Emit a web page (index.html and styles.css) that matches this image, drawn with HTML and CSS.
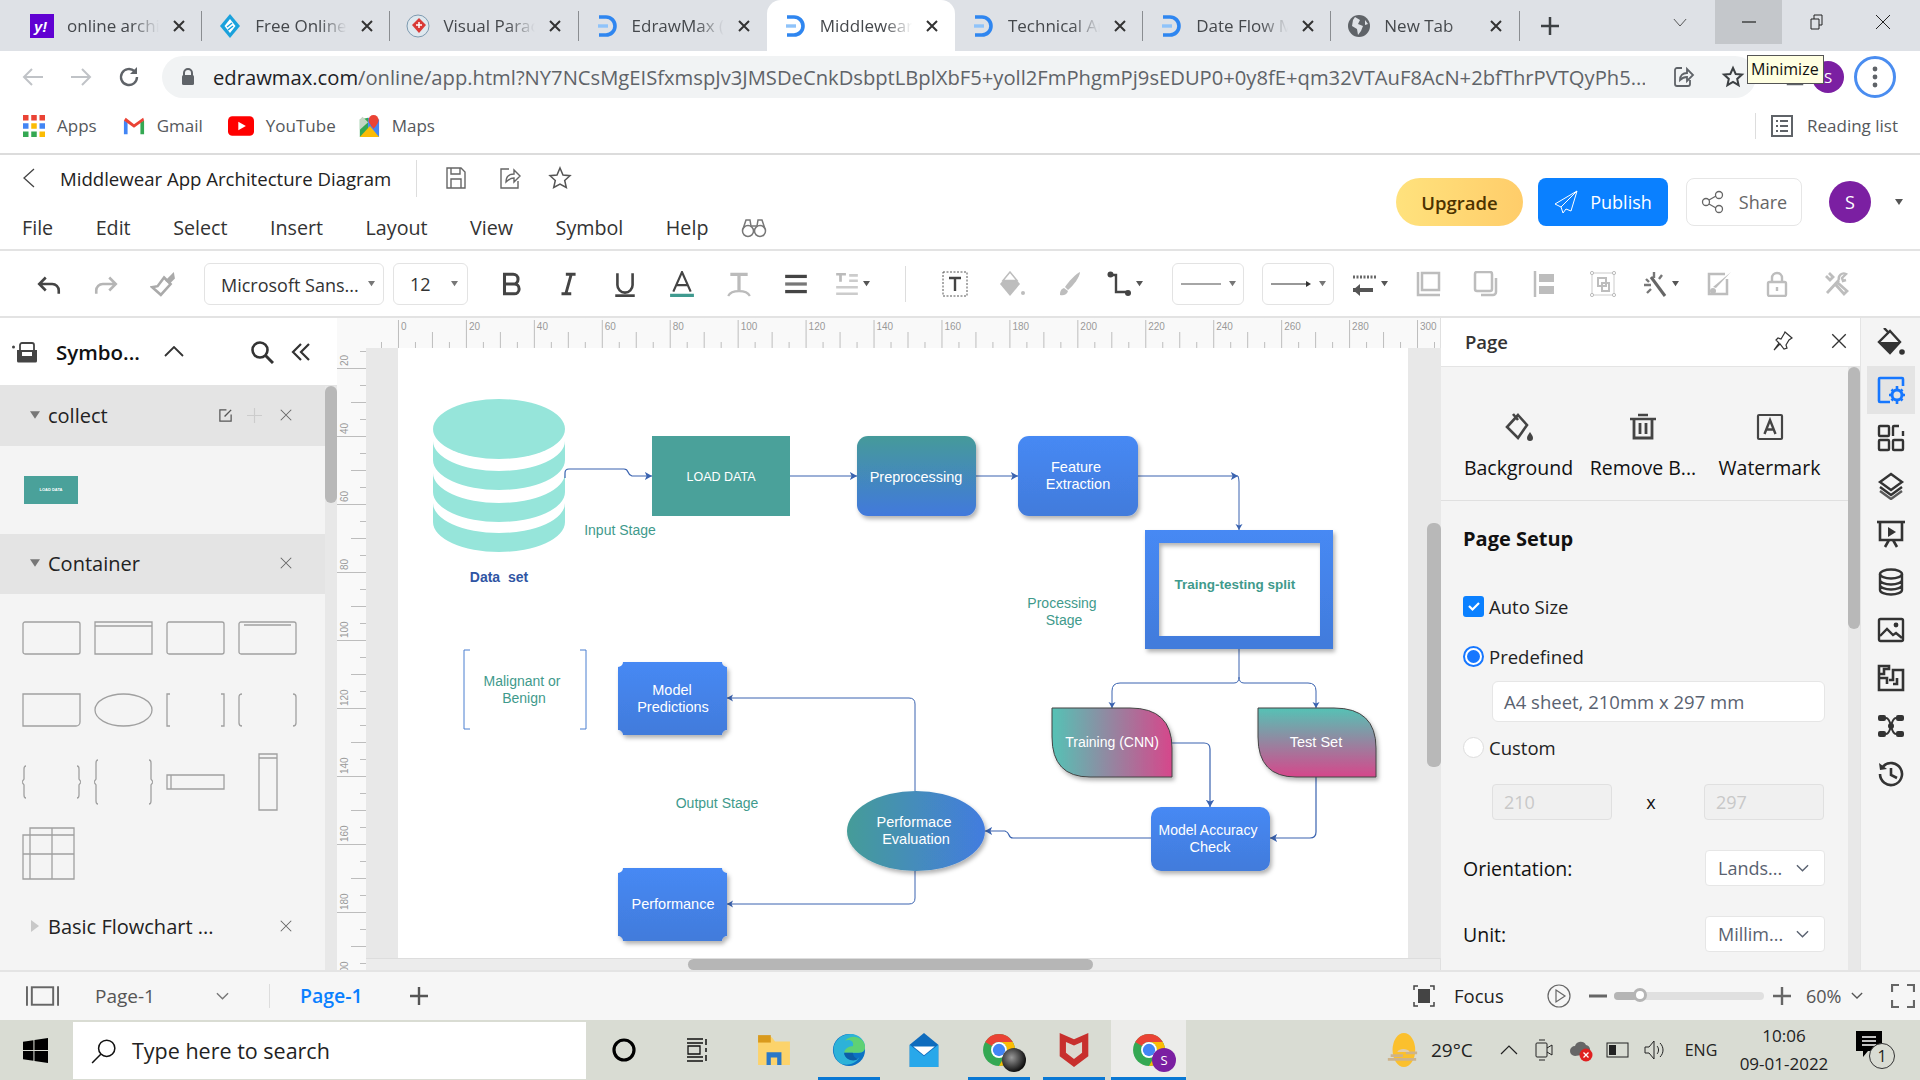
FILE: index.html
```
<!DOCTYPE html>
<html lang="en">
<head>
<meta charset="utf-8">
<title>Middlewear App Architecture Diagram</title>
<link rel="stylesheet" href="styles.css">
</head>
<body>
<svg class="sprite" width="0" height="0">
  <defs>
    <symbol id="edraw" viewBox="0 0 24 24"><path d="M4 3h7a9 9 0 0 1 0 18H4" fill="none" stroke="#2f86f0" stroke-width="3.6"/><path d="M3 12h10" stroke="#8fc3fa" stroke-width="3.4"/></symbol>
    <symbol id="tabx" viewBox="0 0 14 14"><path d="M2 2l10 10M12 2L2 12" stroke="#333" stroke-width="2"/></symbol>
    <symbol id="thinx" viewBox="0 0 16 16"><path d="M2 2l12 12M14 2L2 14" stroke="currentColor" stroke-width="1.2" fill="none"/></symbol>
    <symbol id="caret" viewBox="0 0 10 8"><path d="M1 1h8L5 7z" fill="currentColor"/></symbol>
    <symbol id="vee" viewBox="0 0 14 8"><path d="M1 1l6 6 6-6" fill="none" stroke="currentColor" stroke-width="1.5"/></symbol>
    <symbol id="chrome" viewBox="0 0 32 32"><circle cx="16" cy="16" r="15" fill="#34a853"/><path d="M16 1a15 15 0 0 1 13 7.5H16a7.5 7.5 0 0 0-6.5 3.8L3 8.500A15 15 0 0 1 16 1z" fill="#ea4335"/><path d="M29 8.500A15 15 0 0 1 16 31l6.500-11.200A7.500 7.500 0 0 0 16 8.500z" fill="#fbbc05"/><circle cx="16" cy="16" r="7.500" fill="#fff"/><circle cx="16" cy="16" r="5.800" fill="#4285f4"/></symbol>
    <linearGradient id="gBlue" x1="0" y1="0" x2="0" y2="1"><stop offset="0" stop-color="#4689f4"/><stop offset="1" stop-color="#427bdb"/></linearGradient>
    <linearGradient id="gTealBlue" x1="0" y1="0" x2="0" y2="1"><stop offset="0" stop-color="#459a9a"/><stop offset="1" stop-color="#4279dc"/></linearGradient>
    <linearGradient id="gEval" x1="0" y1="0" x2="1" y2="0"><stop offset="0" stop-color="#459c98"/><stop offset="1" stop-color="#437cdf"/></linearGradient>
    <linearGradient id="gTrain" x1="0" y1="0" x2="1" y2="0"><stop offset="0" stop-color="#55c2b5"/><stop offset="1" stop-color="#d6478b"/></linearGradient>
    <linearGradient id="gTest" x1="0" y1="0" x2="0" y2="1"><stop offset="0" stop-color="#55c2b5"/><stop offset="1" stop-color="#d6478b"/></linearGradient>
    <filter id="shadow" x="-10%" y="-10%" width="125%" height="130%"><feDropShadow dx="2" dy="3" stdDeviation="2" flood-color="#000" flood-opacity=".3"/></filter>
    <marker id="arrow" markerWidth="7" markerHeight="8" refX="6" refY="4" orient="auto"><path d="M0 0.500L6 4 0 7.500 1.500 4z" fill="#3a63b0"/></marker>
    <pattern id="topTicks" patternUnits="userSpaceOnUse" x="398" y="318" width="68" height="30"><path d="M.5 2v28M34.500 14v16M17.500 24v6M51.500 24v6" stroke="#bdbdbd"/></pattern>
    <pattern id="leftTicks" patternUnits="userSpaceOnUse" x="337" y="368" width="29" height="68"><path d="M0 .5h29M14 34.500h15M23 17.500h6M23 51.500h6" stroke="#bdbdbd"/></pattern>
  </defs>
</svg>

<header class="tabstrip">
  <div class="tab sep">
    <svg class="fav" viewBox="0 0 24 24"><rect width="24" height="24" fill="#6001d2"/><text x="4" y="18" class="yh">y!</text></svg>
    <span class="tab-t">online archi</span><svg class="tx"><use href="#tabx"/></svg>
  </div>
  <div class="tab sep">
    <svg class="fav" viewBox="0 0 24 24"><path d="M12 0l10 12-10 12L2 12z" fill="#1aa1dc"/><path d="M12 5l5.500 7-5.500 7-5.500-7z" fill="#fff"/><path d="M9 13l5-4M10 16l5-4" stroke="#1aa1dc" stroke-width="1.500"/></svg>
    <span class="tab-t">Free Online</span><svg class="tx"><use href="#tabx"/></svg>
  </div>
  <div class="tab sep">
    <svg class="fav" viewBox="0 0 24 24"><circle cx="12" cy="12" r="11" fill="#dfe8ee" stroke="#7d9ab0"/><path d="M13 4l7 7-7 8-7-8z" fill="#d93a36"/><path d="M10 11h6M13 8v6" stroke="#fff" stroke-width="1.500"/></svg>
    <span class="tab-t">Visual Parac</span><svg class="tx"><use href="#tabx"/></svg>
  </div>
  <div class="tab">
    <svg class="fav"><use href="#edraw"/></svg>
    <span class="tab-t">EdrawMax (</span><svg class="tx"><use href="#tabx"/></svg>
  </div>
  <div class="tab active">
    <svg class="fav"><use href="#edraw"/></svg>
    <span class="tab-t">Middlewear</span><svg class="tx"><use href="#tabx"/></svg>
  </div>
  <div class="tab sep">
    <svg class="fav"><use href="#edraw"/></svg>
    <span class="tab-t">Technical Ar</span><svg class="tx"><use href="#tabx"/></svg>
  </div>
  <div class="tab sep">
    <svg class="fav"><use href="#edraw"/></svg>
    <span class="tab-t">Date Flow M</span><svg class="tx"><use href="#tabx"/></svg>
  </div>
  <div class="tab sep">
    <svg class="fav" viewBox="0 0 24 24"><circle cx="12" cy="12" r="11" fill="#5f6368"/><path d="M8 3l5 3-2 4 5 2-2 5-3 4-1-6-5-3 1-6zM18 6l3 4-3 1z" fill="#dee1e6"/></svg>
    <span class="tab-t">New Tab</span><svg class="tx"><use href="#tabx"/></svg>
  </div>
  <svg class="newtab" viewBox="0 0 20 20"><path d="M10 1v18M1 10h18" stroke="#3c4043" stroke-width="2.500"/></svg>
  <div class="winctl">
    <svg class="wc-list" viewBox="0 0 16 10"><path d="M1 1l7 8 7-8" fill="none" stroke="#444"/></svg>
    <div class="wc wc-min"><svg viewBox="0 0 16 16"><path d="M1 8h14" stroke="#222" stroke-width="1.200"/></svg></div>
    <div class="wc"><svg viewBox="0 0 16 16"><path d="M3 5h8v10H3zM6 5V1h8v10h-3" fill="none" stroke="#222"/></svg></div>
    <div class="wc"><svg viewBox="0 0 16 16"><path d="M1 1l14 14M15 1L1 15" stroke="#222"/></svg></div>
  </div>
</header>

<div class="addr">
  <svg class="nav" viewBox="0 0 24 24"><path d="M22 12H3M11 4l-8 8 8 8" fill="none" stroke="#c0c3c7" stroke-width="2"/></svg>
  <svg class="nav" viewBox="0 0 24 24"><path d="M2 12h19M13 4l8 8-8 8" fill="none" stroke="#c0c3c7" stroke-width="2"/></svg>
  <svg class="nav" viewBox="0 0 24 24"><path d="M20 12a8 8 0 1 1-2.500-5.800" fill="none" stroke="#5f6368" stroke-width="2.400"/><path d="M20 2v7h-7z" fill="#5f6368"/></svg>
  <div class="omni">
    <svg class="lock" viewBox="0 0 14 18"><path d="M3 8V5a4 4 0 0 1 8 0v3" fill="none" stroke="#5f6368" stroke-width="2"/><rect x="1" y="7" width="12" height="10" rx="1.500" fill="#5f6368"/></svg>
    <span class="url"><b class="url-host">edrawmax.com</b>/online/app.html?NY7NCsMgEISfxmspJv3JMSDeCnkDsbptLBplXbF5+yoll2FmPhgmPj9sEDUP0+0y8fE+qm32VTAuF8AcN+2bfThrPVTQyPh5...</span>
    <svg class="omni-i" viewBox="0 0 24 24"><path d="M11 3H6a2 2 0 0 0-2 2v14a2 2 0 0 0 2 2h11a2 2 0 0 0 2-2v-4" fill="none" stroke="#5f6368" stroke-width="1.800"/><path d="M9 15c0-5 3-7 7-7V4l6 6-6 6v-4c-3 0-5 1-7 3z" fill="none" stroke="#5f6368" stroke-width="1.800"/></svg>
    <svg class="omni-i" viewBox="0 0 24 24"><path d="M12 3l2.700 6 6.300.6-4.800 4.300 1.400 6.300L12 17l-5.600 3.200 1.400-6.300L3 9.600 9.300 9z" fill="none" stroke="#3c4043" stroke-width="2"/></svg>
  </div>
  <svg class="ext" viewBox="0 0 24 24"><path d="M3 8h18v13H3z" fill="#5f6368"/></svg>
  <span class="ava-s">S</span>
  <span class="dots"><svg viewBox="0 0 6 24" width="6" height="24"><circle cx="3" cy="4" r="2.400" fill="#5f6368"/><circle cx="3" cy="12" r="2.400" fill="#5f6368"/><circle cx="3" cy="20" r="2.400" fill="#5f6368"/></svg></span>
  <span class="tooltip">Minimize</span>
</div>

<nav class="bookmarks">
  <svg class="bm-i" viewBox="0 0 20 20"><g><rect x="0" y="0" width="5" height="5" fill="#ea4335"/><rect x="7.500" y="0" width="5" height="5" fill="#ea4335"/><rect x="15" y="0" width="5" height="5" fill="#ea4335"/><rect x="0" y="7.500" width="5" height="5" fill="#4285f4"/><rect x="7.500" y="7.500" width="5" height="5" fill="#fbbc05"/><rect x="15" y="7.500" width="5" height="5" fill="#4285f4"/><rect x="0" y="15" width="5" height="5" fill="#34a853"/><rect x="7.500" y="15" width="5" height="5" fill="#34a853"/><rect x="15" y="15" width="5" height="5" fill="#fbbc05"/></g></svg>
  <span class="bm-t bm-apps">Apps</span>
  <svg class="bm-i" viewBox="0 0 24 20"><path d="M1 19V4l4 2v13z" fill="#4285f4"/><path d="M19 19V6l4-2v15z" fill="#34a853"/><path d="M1 4l11 8 11-8-1-3-10 7L3 1z" fill="#ea4335"/></svg>
  <span class="bm-t bm-gmail">Gmail</span>
  <svg class="bm-i bm-yt" viewBox="0 0 24 18"><rect width="24" height="18" rx="4" fill="#f00"/><path d="M9.500 5l7 4-7 4z" fill="#fff"/></svg>
  <span class="bm-t bm-youtube">YouTube</span>
  <svg class="bm-i" viewBox="0 0 22 24"><path d="M1 5l9-2v19l-9 2z" fill="#34a853"/><path d="M10 3l12 2v19l-12-2z" fill="#4285f4"/><path d="M1 24l11-12 10 12z" fill="#fbbc05"/><path d="M4 2l6 6-9 8V5z" fill="#c4d6c4"/><path d="M16 0a5.500 5.500 0 0 1 5.500 5.500C21.500 9.500 16 15 16 15s-5.500-5.500-5.500-9.500A5.500 5.500 0 0 1 16 0z" fill="#ea4335"/></svg>
  <span class="bm-t">Maps</span>
  <div class="reading">
    <svg class="rl-i" viewBox="0 0 22 22"><rect x="1" y="1" width="20" height="20" fill="none" stroke="#5f6368" stroke-width="2"/><path d="M5 6h2M9 6h8M5 11h2M9 11h8M5 16h2M9 16h8" stroke="#5f6368" stroke-width="2"/></svg>
    <span class="bm-t">Reading list</span>
  </div>
</nav>

<section class="apphead">
  <div class="apphead-l">
    <div class="titlerow">
      <svg class="i-back" viewBox="0 0 12 20"><path d="M11 1L1 10l10 9" fill="none" stroke="#444" stroke-width="1.300"/></svg>
      <span class="doc-title">Middlewear App Architecture Diagram</span>
      <span class="doc-div"></span>
      <svg class="doc-i" viewBox="0 0 24 24"><path d="M3 2h14l4 4v16H3z M7 2v6h9V2 M7 22v-9h10v9" fill="none" stroke="#666" stroke-width="1.400"/></svg>
      <svg class="doc-i" viewBox="0 0 24 24"><path d="M11 3H3v19h17v-7" fill="none" stroke="#666" stroke-width="1.400"/><path d="M8 16c0-5 3-8 8-8V4l6 6-6 6v-4c-4 0-6 2-8 4z" fill="none" stroke="#666" stroke-width="1.400"/></svg>
      <svg class="doc-i" viewBox="0 0 24 24"><path d="M12 2l3 7 7 .7-5.300 4.700 1.600 7.100L12 18l-6.300 3.500 1.600-7.100L2 9.700 9 9z" fill="none" stroke="#555" stroke-width="1.500"/></svg>
    </div>
    <div class="menurow">
      <span>File</span><span>Edit</span><span>Select</span><span>Insert</span><span>Layout</span><span>View</span><span>Symbol</span><span>Help</span>
      <svg class="bino" viewBox="0 0 26 22"><circle cx="7" cy="15" r="5.500" fill="none" stroke="#777" stroke-width="1.500"/><circle cx="19" cy="15" r="5.500" fill="none" stroke="#777" stroke-width="1.500"/><path d="M2 13l3-9h4l1 6h6l1-6h4l3 9" fill="none" stroke="#777" stroke-width="1.500"/></svg>
    </div>
  </div>
  <div class="apphead-r">
    <span class="btn-upgrade">Upgrade</span>
    <span class="btn-publish"><svg viewBox="0 0 24 24" class="pub-i"><path d="M23 1L1 14l6 3zM23 1L7 17l2 6 3-4 5 2z" fill="none" stroke="#fff" stroke-width="1"/></svg>Publish</span>
    <span class="btn-share"><svg viewBox="0 0 24 24" class="shr-i"><circle cx="5" cy="12" r="3.500" fill="none" stroke="#666" stroke-width="1.300"/><circle cx="18" cy="5" r="3.500" fill="none" stroke="#666" stroke-width="1.300"/><circle cx="18" cy="19" r="3.500" fill="none" stroke="#666" stroke-width="1.300"/><path d="M8 10l7-4M8 14l7 4" stroke="#666" stroke-width="1.300"/></svg>Share</span>
    <span class="ava-l">S</span>
    <svg class="ava-c"><use href="#caret"/></svg>
  </div>
</section>

<section class="toolbar">
  <div class="tg tg1">
    <span class="ti"><svg viewBox="0 0 24 24"><path d="M9 6L3 12l6 6M3 12h12a6 6 0 0 1 6 6v3" fill="none" stroke="#444" stroke-width="2.400"/></svg></span>
    <span class="ti"><svg viewBox="0 0 24 24"><path d="M15 6l6 6-6 6M21 12H9a6 6 0 0 0-6 6v3" fill="none" stroke="#b5b5b5" stroke-width="2.400"/></svg></span>
    <span class="ti"><svg viewBox="0 0 24 24"><path d="M13 6l6 6-9 10-8-7 5-1z" fill="none" stroke="#aaa" stroke-width="2.400"/><path d="M14 9l8-8 1 6-5 5z" fill="#aaa"/></svg></span>
  </div>
  <div class="sel sel-font"><span>Microsoft Sans...</span><svg><use href="#caret"/></svg></div>
  <div class="sel sel-size"><span>12</span><svg><use href="#caret"/></svg></div>
  <div class="tg tg2">
    <span class="ti ti-t"><svg viewBox="0 0 24 24"><path d="M6 3h8a4.500 4.500 0 0 1 0 9H6zM6 12h9a4.500 4.500 0 0 1 0 9H6z" fill="none" stroke="#444" stroke-width="2.800"/></svg></span>
    <span class="ti ti-t"><svg viewBox="0 0 24 24"><path d="M10 3h9M6 21h9M15 3l-5 18" fill="none" stroke="#444" stroke-width="2.600"/></svg></span>
    <span class="ti ti-t"><svg viewBox="0 0 24 24"><path d="M5 2v11a7 7 0 0 0 14 0V2" fill="none" stroke="#444" stroke-width="2.400"/><path d="M3 23h18" stroke="#444" stroke-width="3"/></svg></span>
    <span class="ti ti-t"><svg viewBox="0 0 24 24"><path d="M4 19L12 1l8 18M7 13h10" fill="none" stroke="#444" stroke-width="2"/><path d="M1 23h22" stroke="#3f9a8f" stroke-width="4"/></svg></span>
    <span class="ti ti-t"><svg viewBox="0 0 24 24"><path d="M4 3h16M12 3v15" fill="none" stroke="#bbb" stroke-width="3"/><path d="M2 23c3-6 17-6 20 0" fill="none" stroke="#bbb" stroke-width="2"/></svg></span>
    <span class="ti ti-t"><svg viewBox="0 0 24 24"><path d="M2 5h20" stroke="#444" stroke-width="3"/><path d="M2 12h20" stroke="#777" stroke-width="3"/><path d="M2 19h20" stroke="#444" stroke-width="3"/></svg></span>
    <span class="ti ti-t ti-wide"><svg viewBox="0 0 24 24"><path d="M2 3h9M6 3v7" stroke="#bbb" stroke-width="2.500"/><path d="M14 4h8M14 9h8M2 15h20M2 21h20" stroke="#ccc" stroke-width="2.500"/></svg><svg class="mc"><use href="#caret"/></svg></span>
  </div>
  <span class="tb-div"></span>
  <div class="tg tg3">
    <span class="ti"><svg viewBox="0 0 26 26"><path d="M1 1h24v24H1z" fill="none" stroke="#555" stroke-dasharray="2 1.500"/><path d="M7 7h12M13 7v13" stroke="#444" stroke-width="2.400"/></svg></span>
    <span class="ti"><svg viewBox="0 0 26 26"><path d="M11 1l10 12-10 12L1 13z" fill="#bdbdbd"/><path d="M4 9.500h14L11 1z" fill="#fff" stroke="#bdbdbd" stroke-width="1.500"/><circle cx="24" cy="22" r="2" fill="#bdbdbd"/></svg></span>
    <span class="ti"><svg viewBox="0 0 26 26"><path d="M24 1c-3 1-12 10-15 15l3 3c5-4 12-13 12-18z" fill="#bdbdbd"/><path d="M8 17c-3 1-4 3-4 7 3 1 7 0 8-4z" fill="#bdbdbd"/></svg></span>
    <span class="ti ti-wide"><svg viewBox="0 0 26 26"><circle cx="3.500" cy="3.500" r="3" fill="#444"/><circle cx="21" cy="22" r="3" fill="#444"/><path d="M4 4h5v17h11" fill="none" stroke="#444" stroke-width="2.400"/></svg><svg class="mc"><use href="#caret"/></svg></span>
  </div>
  <div class="sel sel-line"><svg class="ln" viewBox="0 0 40 4"><path d="M0 2h40" stroke="#888" stroke-width="1.300"/></svg><svg><use href="#caret"/></svg></div>
  <div class="sel sel-line sel-arrow"><svg class="ln" viewBox="0 0 40 8"><path d="M0 4h38" stroke="#333" stroke-width="1.200"/><path d="M35 1l5 3-5 3z" fill="#333"/></svg><svg><use href="#caret"/></svg></div>
  <div class="tg tg4">
    <span class="ti ti-wide"><svg viewBox="0 0 26 26"><path d="M1 6h24" stroke="#666" stroke-width="3" stroke-dasharray="2 1.500"/><path d="M1 19h20" stroke="#555" stroke-width="4"/><path d="M8 13l-7 6 7 6z" fill="#555"/></svg><svg class="mc"><use href="#caret"/></svg></span>
    <span class="ti"><svg viewBox="0 0 26 26"><path d="M3 1v23h22" fill="none" stroke="#bdbdbd" stroke-width="2.500"/><rect x="7" y="2" width="17" height="17" fill="none" stroke="#bdbdbd" stroke-width="2.500"/></svg></span>
    <span class="ti"><svg viewBox="0 0 26 26"><rect x="2" y="1" width="17" height="19" rx="2" fill="none" stroke="#bdbdbd" stroke-width="2.500"/><path d="M23 7v14a3 3 0 0 1-3 3H8" fill="none" stroke="#bdbdbd" stroke-width="2.500"/></svg></span>
    <span class="ti"><svg viewBox="0 0 26 26"><path d="M3 0v26" stroke="#bdbdbd" stroke-width="2.500"/><rect x="7" y="3" width="15" height="8" fill="#bdbdbd"/><rect x="7" y="15" width="15" height="8" fill="#bdbdbd"/></svg></span>
    <span class="ti"><svg viewBox="0 0 26 26"><rect x="2" y="2" width="22" height="22" fill="none" stroke="#ccc"/><path d="M8 7h8v8H8zM12 12h7v8h-7z" fill="none" stroke="#bdbdbd" stroke-width="2"/><g fill="#fff" stroke="#bbb"><circle cx="2" cy="2" r="1.600"/><circle cx="24" cy="2" r="1.600"/><circle cx="2" cy="24" r="1.600"/><circle cx="24" cy="24" r="1.600"/></g></svg></span>
    <span class="ti ti-wide"><svg viewBox="0 0 26 26"><path d="M8 6l14 19" stroke="#666" stroke-width="3"/><path d="M11 1v6M3 8l3 3M1 14h7M4 22l4-4M19 4l-3 4" stroke="#777" stroke-width="2.400"/></svg><svg class="mc"><use href="#caret"/></svg></span>
    <span class="ti"><svg viewBox="0 0 26 26"><path d="M19 3H3v20h18V8" fill="none" stroke="#bdbdbd" stroke-width="2.500"/><path d="M25 1L10 17l-3-1z" fill="#bdbdbd"/><circle cx="7" cy="20" r="3" fill="#bdbdbd"/></svg></span>
    <span class="ti"><svg viewBox="0 0 26 26"><path d="M8 11V7a5 5 0 0 1 10 0v4" fill="none" stroke="#bdbdbd" stroke-width="2.400"/><rect x="4" y="11" width="18" height="14" rx="1.500" fill="none" stroke="#bdbdbd" stroke-width="2.400"/><path d="M13 16v4" stroke="#bdbdbd" stroke-width="2.400"/></svg></span>
    <span class="ti"><svg viewBox="0 0 26 26"><path d="M4 22L16 9M6 2l4 4-3 3-4-4M13 14l8 9 3-3-9-8" fill="none" stroke="#bdbdbd" stroke-width="2.800"/><path d="M16 9a5 5 0 0 1 7-6l-4 4 1 3 3-1" fill="none" stroke="#bdbdbd" stroke-width="2.400"/></svg></span>
  </div>
</section>

<main class="workspace">
  <aside class="symbols">
    <div class="sym-head">
      <svg class="sym-logo" viewBox="0 0 26 22"><circle cx="1.500" cy="6" r="1.500" fill="#444"/><path d="M5 9h20v11a1.500 1.500 0 0 1-1.500 1.500h-17A1.500 1.500 0 0 1 5 20z" fill="#444"/><path d="M8 9V4a2 2 0 0 1 2-2h10a2 2 0 0 1 2 2v5" fill="none" stroke="#444" stroke-width="1.800"/><path d="M10 11h10v4H10z" fill="#fff"/></svg>
      <span class="sym-t">Symbo...</span>
      <svg class="sym-up" viewBox="0 0 20 11"><path d="M1 10l9-9 9 9" fill="none" stroke="#333" stroke-width="1.800"/></svg>
      <svg class="sym-s" viewBox="0 0 24 24"><circle cx="10" cy="10" r="7.500" fill="none" stroke="#333" stroke-width="2.600"/><path d="M15.500 15.500L23 23" stroke="#333" stroke-width="3"/></svg>
      <svg class="sym-c" viewBox="0 0 20 18"><path d="M10 1L2 9l8 8M18 1l-8 8 8 8" fill="none" stroke="#333" stroke-width="2.200"/></svg>
    </div>
    <div class="sym-body">
      <div class="sym-list">
        <div class="lib-row">
          <svg class="lib-c"><use href="#caret"/></svg><span class="lib-t">collect</span>
          <svg class="lib-a" viewBox="0 0 16 16"><path d="M9 2H2v12h12V7" fill="none" stroke="#555" stroke-width="1.300"/><path d="M7 9l7-7" stroke="#555" stroke-width="1.500"/></svg>
          <svg class="lib-a lib-p" viewBox="0 0 16 16"><path d="M8 0v16M0 8h16" stroke="#ccc" stroke-width="1.300"/></svg>
          <svg class="lib-x"><use href="#thinx"/></svg>
        </div>
        <div class="lib-item"><span class="mini-load">LOAD DATA</span></div>
        <div class="lib-row">
          <svg class="lib-c"><use href="#caret"/></svg><span class="lib-t">Container</span>
          <svg class="lib-x lib-x-only"><use href="#thinx"/></svg>
        </div>
        <div class="shapes">
          <svg viewBox="0 0 59 34"><rect x="1" y="1" width="57" height="32" rx="2" class="sh"/></svg>
          <svg viewBox="0 0 59 34"><path d="M1 1h57v32H1zM1 5h57" class="sh"/></svg>
          <svg viewBox="0 0 59 34"><rect x="1" y="1" width="57" height="32" rx="2" class="sh"/></svg>
          <svg viewBox="0 0 59 34"><rect x="1" y="1" width="57" height="32" rx="2" class="sh"/><path d="M6 4h47" class="sh"/></svg>
          <svg viewBox="0 0 59 34"><path d="M1 1h57v28a4 4 0 0 1-4 4H1z" class="sh"/></svg>
          <svg viewBox="0 0 59 34"><ellipse cx="29.500" cy="17" rx="28.500" ry="16" class="sh"/></svg>
          <svg viewBox="0 0 59 34"><path d="M4 1H1v32h3M55 1h3v32h-3" class="sh"/></svg>
          <svg viewBox="0 0 59 34"><path d="M4 1Q1 1 1 4v26q0 3 3 3M55 1q3 0 3 3v26q0 3-3 3" class="sh"/></svg>
          <svg viewBox="0 0 59 34"><path d="M4 1Q2 1 2 4v10l-2 3 2 3v10q0 3 2 3M55 1q2 0 2 3v10l2 3-2 3v10q0 3-2 3" class="sh"/></svg>
          <svg viewBox="0 0 59 46"><path d="M4 1Q2 1 2 4v16l-2 3 2 3v16q0 3 2 3M55 1q2 0 2 3v16l2 3-2 3v16q0 3-2 3" class="sh"/></svg>
          <svg viewBox="0 0 59 16"><path d="M1 1h57v14H1zM5 1v14" class="sh"/></svg>
          <svg viewBox="0 0 59 58"><path d="M21 1h18v56H21zM21 5h18" class="sh"/></svg>
          <svg viewBox="0 0 59 54"><path d="M8 1h44v51H1V8h7zM8 1v51M30 1v51M1 27h51M8 8h44" class="sh"/></svg>
        </div>
        <div class="lib-row lib-closed">
          <svg class="lib-c lib-c-r" viewBox="0 0 8 12"><path d="M0 0l8 6-8 6z" fill="#c8c8c8"/></svg><span class="lib-t">Basic Flowchart ...</span>
          <svg class="lib-x lib-x-only"><use href="#thinx"/></svg>
        </div>
      </div>
      <div class="vs"><div class="vs-thumb vs-left"></div></div>
    </div>
  </aside>

  <section class="stage">
    <div class="ruler-top">
      <div class="ruler-corner"></div>
      <svg class="rt" viewBox="366 318 1075 30">
        <rect x="366" y="318" width="1075" height="30" fill="url(#topTicks)"/>
        <g class="rl">
          <text x="401" y="330">0</text><text x="469" y="330">20</text><text x="537" y="330">40</text><text x="605" y="330">60</text><text x="673" y="330">80</text><text x="741" y="330">100</text><text x="809" y="330">120</text><text x="877" y="330">140</text><text x="945" y="330">160</text><text x="1013" y="330">180</text><text x="1081" y="330">200</text><text x="1149" y="330">220</text><text x="1217" y="330">240</text><text x="1285" y="330">260</text><text x="1353" y="330">280</text><text x="1421" y="330">300</text>
        </g>
      </svg>
    </div>
    <div class="stage-mid">
      <svg class="rlft" viewBox="337 348 29 622">
        <rect x="337" y="348" width="29" height="622" fill="url(#leftTicks)"/>
        <g class="rl">
          <text transform="translate(348 366) rotate(-90)">20</text><text transform="translate(348 434) rotate(-90)">40</text><text transform="translate(348 502) rotate(-90)">60</text><text transform="translate(348 570) rotate(-90)">80</text><text transform="translate(348 638) rotate(-90)">100</text><text transform="translate(348 706) rotate(-90)">120</text><text transform="translate(348 774) rotate(-90)">140</text><text transform="translate(348 842) rotate(-90)">160</text><text transform="translate(348 910) rotate(-90)">180</text><text transform="translate(348 978) rotate(-90)">200</text>
        </g>
      </svg>
      <div class="canvas-col">
        <div class="canvas-row">
          <div class="canvas">
            <svg class="page" viewBox="398 348 1010 610">
              <!-- cylinder -->
              <g fill="#96e5da">
                <path d="M433 503v19a66 30 0 0 0 132 0v-19a66 30 0 0 1-132 0z"/>
                <path d="M433 473v19a66 30 0 0 0 132 0v-19a66 30 0 0 1-132 0z"/>
                <path d="M433 441v19a66 30 0 0 0 132 0v-19a66 30 0 0 1-132 0z"/>
                <ellipse cx="499" cy="429" rx="66" ry="30"/>
              </g>
              <!-- connectors -->
              <g class="edge">
                <path d="M565 478v-5q0-4 4-4h55q3 0 4 3t4 4h20" marker-end="url(#arrow)"/>
                <path d="M790 476h67" marker-end="url(#arrow)"/>
                <path d="M976 476h42" marker-end="url(#arrow)"/>
                <path d="M1138 476h100" marker-end="url(#arrow)"/>
                <path class="thin" d="M1238 476q1 3 1 6v48" marker-end="url(#arrow)"/>
                <path class="thin" d="M1239 649v28q0 6-5 6h-114q-8 0-8 8v17" marker-end="url(#arrow)"/>
                <path class="thin" d="M1239 677q0 6 5 6h64q8 0 8 8v17" marker-end="url(#arrow)"/>
                <path d="M1172 743h32q6 0 6 6v58" marker-end="url(#arrow)"/>
                <path d="M1316 777v55q0 6-6 6h-40" marker-end="url(#arrow)"/>
                <path d="M1151 838h-138q-3 0-4-3t-4-4h-20" marker-end="url(#arrow)"/>
                <path class="thin" d="M915 791v-87q0-6-6-6h-182" marker-end="url(#arrow)"/>
                <path class="thin" d="M915 871v27q0 6-6 6h-182" marker-end="url(#arrow)"/>
              </g>
              <!-- nodes -->
              <rect x="652" y="436" width="138" height="80" fill="#4aa19a"/>
              <rect x="857" y="436" width="119" height="80" rx="11" fill="url(#gTealBlue)" filter="url(#shadow)"/>
              <rect x="1018" y="436" width="120" height="80" rx="11" fill="url(#gBlue)" filter="url(#shadow)"/>
              <path d="M1145 530h188v119h-188zM1159 543v93h161v-93z" fill="url(#gBlue)" fill-rule="evenodd" filter="url(#shadow)"/>
              <path d="M623 662h99a5 5 0 0 0 5 5v63a5 5 0 0 0-5 5h-99a5 5 0 0 0-5-5v-63a5 5 0 0 0 5-5z" fill="url(#gBlue)" filter="url(#shadow)"/>
              <path d="M623 868h99a5 5 0 0 0 5 5v63a5 5 0 0 0-5 5h-99a5 5 0 0 0-5-5v-63a5 5 0 0 0 5-5z" fill="url(#gBlue)" filter="url(#shadow)"/>
              <path d="M1052 708h78q42 0 42 40v29h-82q-38 0-38-40z" fill="url(#gTrain)" stroke="#444" filter="url(#shadow)"/>
              <path d="M1258 708h76q42 0 42 40v29h-80q-38 0-38-40z" fill="url(#gTest)" stroke="#444" filter="url(#shadow)"/>
              <rect x="1151" y="807" width="119" height="64" rx="10" fill="url(#gBlue)" filter="url(#shadow)"/>
              <ellipse cx="916" cy="831" rx="69" ry="40" fill="url(#gEval)" filter="url(#shadow)"/>
              <path class="bracket" d="M470 650h-6v79h6M580 650h6v79h-6"/>
              <!-- labels -->
              <g class="nt">
                <text x="721" y="481" class="nt-s">LOAD DATA</text>
                <text x="916" y="482">Preprocessing</text>
                <text x="1076" y="472">Feature</text><text x="1078" y="489">Extraction</text>
                <text x="672" y="695">Model</text><text x="673" y="712">Predictions</text>
                <text x="673" y="909">Performance</text>
                <text x="1112" y="747" class="nt-m">Training (CNN)</text>
                <text x="1316" y="747">Test Set</text>
                <text x="1208" y="835" class="nt-m">Model Accuracy</text><text x="1210" y="852">Check</text>
                <text x="914" y="827">Performace</text><text x="916" y="844">Evaluation</text>
              </g>
              <g class="lbl">
                <text x="620" y="535">Input Stage</text>
                <text x="1062" y="608">Processing</text><text x="1064" y="625">Stage</text>
                <text x="522" y="686">Malignant or</text><text x="524" y="703">Benign</text>
                <text x="717" y="808">Output Stage</text>
              </g>
              <text x="499" y="582" class="lbl-blue">Data  set</text>
              <text x="1235" y="589" class="lbl-bold">Traing-testing split</text>
            </svg>
          </div>
          <div class="vs vs-c"><div class="vs-thumb vs-center"></div></div>
        </div>
        <div class="hs"><div class="hs-thumb"></div></div>
      </div>
    </div>
  </section>

  <aside class="props">
    <div class="props-head">
      <span class="props-t">Page</span>
      <svg class="pin" viewBox="0 0 20 20"><path d="M12 1l7 6-3 2-3 5 1 3-3 1-4-5-6 6 5-7-3-3 2-2 3 1 3-5z" fill="none" stroke="#333" stroke-width="1.200"/></svg>
      <svg class="props-x"><use href="#thinx"/></svg>
    </div>
    <div class="props-body">
      <div class="props-list">
        <div class="actions">
          <div class="act"><svg viewBox="0 0 28 28"><path d="M13 2l9 10-9 13-11-11z" fill="none" stroke="#444" stroke-width="2.600"/><path d="M8 1l5 6" stroke="#444" stroke-width="2.600"/><path d="M25 19c2 3 3 4 3 6a3 3 0 0 1-6 0c0-2 1-3 3-6z" fill="#444"/></svg><span>Background</span></div>
          <div class="act act-r"><svg viewBox="0 0 28 28"><path d="M1 6h26M9 2h10" stroke="#444" stroke-width="2.600"/><path d="M5 6v19h18V6M11 10v11M17 10v11" fill="none" stroke="#444" stroke-width="2.800"/></svg><span>Remove B...</span></div>
          <div class="act act-w"><svg viewBox="0 0 28 28"><rect x="2" y="2" width="24" height="24" rx="1" fill="none" stroke="#444" stroke-width="2.200"/><path d="M8.500 21L14 7l5.500 14M10.500 16.500h7" fill="none" stroke="#444" stroke-width="2.400"/></svg><span>Watermark</span></div>
        </div>
        <div class="setup">
          <h2 class="setup-t">Page Setup</h2>
          <div class="opt opt-auto"><span class="cb"><svg viewBox="0 0 16 16"><path d="M3 8l3.500 3.500L13 5" fill="none" stroke="#fff" stroke-width="2.200"/></svg></span><span>Auto Size</span></div>
          <div class="opt opt-pre"><span class="rb rb-on"></span><span>Predefined</span></div>
          <div class="field field-a4">A4 sheet, 210mm x 297 mm</div>
          <div class="opt opt-cus"><span class="rb"></span><span>Custom</span></div>
          <div class="dims"><span class="dim">210</span><span class="dim-x">x</span><span class="dim">297</span></div>
          <div class="prop-row prop-or"><span>Orientation:</span><span class="pick"><span>Lands...</span><svg><use href="#vee"/></svg></span></div>
          <div class="prop-row"><span>Unit:</span><span class="pick"><span>Millim...</span><svg><use href="#vee"/></svg></span></div>
        </div>
      </div>
      <div class="vs vs-r"><div class="vs-thumb"></div></div>
    </div>
  </aside>

  <aside class="rail">
    <span class="rail-i"><svg viewBox="0 0 28 28"><path d="M13 3l10 11-10 11L2 14z" fill="none" stroke="#333" stroke-width="2.400"/><path d="M3 14h20l-10 11z" fill="#333"/><path d="M7 0l5 5" stroke="#333" stroke-width="2.400"/><circle cx="25" cy="24" r="2.800" fill="#333"/></svg></span>
    <span class="rail-i rail-on"><svg viewBox="0 0 28 28"><path d="M26 10V3a1 1 0 0 0-1-1H3a1 1 0 0 0-1 1v22a1 1 0 0 0 1 1h10" fill="none" stroke="#1677ff" stroke-width="2.600"/><circle cx="20" cy="19" r="5" fill="none" stroke="#1677ff" stroke-width="3"/><path d="M20 10v3M20 25v3M12 19h3M25 19h3M14.500 13.500l2 2M23.500 22.500l2 2M25.500 13.500l-2 2M16.500 22.500l-2 2" stroke="#1677ff" stroke-width="2.600"/></svg></span>
    <span class="rail-i"><svg viewBox="0 0 28 28"><g fill="none" stroke="#333" stroke-width="2.400"><rect x="2" y="2" width="10" height="10" rx="1"/><rect x="2" y="16" width="10" height="10" rx="1"/><rect x="16" y="16" width="10" height="10" rx="1"/><path d="M16 12V3a1 1 0 0 1 1-1h5M26 7v5"/></g></svg></span>
    <span class="rail-i"><svg viewBox="0 0 28 28"><g fill="none" stroke="#333" stroke-width="2.400"><path d="M14 2l11 8-11 8-11-8z"/><path d="M3 15l11 8 11-8"/><path d="M3 19l11 8 11-8" opacity=".8"/></g></svg></span>
    <span class="rail-i"><svg viewBox="0 0 28 28"><path d="M0 2h28" stroke="#333" stroke-width="2.600"/><path d="M3 3v17h22V3M8 27l4-7M20 27l-4-7" fill="none" stroke="#333" stroke-width="2.600"/><path d="M11 7l8 5-8 5z" fill="#333"/></svg></span>
    <span class="rail-i"><svg viewBox="0 0 28 28"><g fill="none" stroke="#333" stroke-width="2.400"><ellipse cx="14" cy="6" rx="11" ry="4.500"/><path d="M3 6v16c0 2.500 5 4.500 11 4.500s11-2 11-4.500V6M3 12c0 2.500 5 4.500 11 4.500S25 14.500 25 12M3 17c0 2.500 5 4.500 11 4.500s11-2 11-4.500"/></g></svg></span>
    <span class="rail-i"><svg viewBox="0 0 28 28"><rect x="2" y="3" width="24" height="22" rx="1.500" fill="none" stroke="#333" stroke-width="2.400"/><path d="M3 20l7-7 6 6 3-2 6 5" fill="none" stroke="#333" stroke-width="2.400"/><circle cx="19" cy="9" r="2.400" fill="#333"/></svg></span>
    <span class="rail-i"><svg viewBox="0 0 28 28"><path d="M2 2h10v3h-5v5H2zM2 2v24h24V6H16v10h-4" fill="none" stroke="#333" stroke-width="2.600"/><path d="M2 14h8v6M20 14v6h-4" fill="none" stroke="#333" stroke-width="2.600"/></svg></span>
    <span class="rail-i"><svg viewBox="0 0 28 28"><g fill="#333"><rect x="1" y="3" width="8" height="6" rx="2"/><rect x="19" y="3" width="8" height="6" rx="2"/><rect x="1" y="19" width="8" height="6" rx="2"/><rect x="19" y="19" width="8" height="6" rx="2"/><circle cx="14" cy="14" r="3"/></g><path d="M9 6q3 0 5 8t5 8M19 6q-3 0-5 8t-5 8" fill="none" stroke="#333" stroke-width="2"/></svg></span>
    <span class="rail-i"><svg viewBox="0 0 28 28"><path d="M3 14a11 11 0 1 0 3-7.500" fill="none" stroke="#333" stroke-width="2.600"/><path d="M2 3l1 7 7-1z" fill="#333"/><path d="M14 8v7l6 3" fill="none" stroke="#333" stroke-width="2.600"/></svg></span>
  </aside>
</main>

<footer class="statusbar">
  <svg class="sb-pages" viewBox="0 0 34 24"><path d="M1 2v20M33 2v20" stroke="#666" stroke-width="2"/><rect x="6" y="3" width="22" height="18" fill="none" stroke="#666" stroke-width="2"/></svg>
  <span class="sb-page">Page-1</span>
  <svg class="sb-v"><use href="#vee"/></svg>
  <span class="sb-div"></span>
  <span class="sb-cur">Page-1</span>
  <svg class="sb-plus" viewBox="0 0 20 20"><path d="M10 1v18M1 10h18" stroke="#555" stroke-width="2.400"/></svg>
  <div class="sb-right">
    <svg class="sb-focus" viewBox="0 0 22 22"><path d="M1 5V1h4M17 1h4v4M21 17v4h-4M5 21H1v-4" fill="none" stroke="#444" stroke-width="1.500"/><rect x="5" y="4" width="12" height="14" fill="#444"/></svg>
    <span class="sb-ft">Focus</span>
    <svg class="sb-play" viewBox="0 0 24 24"><circle cx="12" cy="12" r="11" fill="none" stroke="#666" stroke-width="1.200"/><path d="M9 6l9 6-9 6z" fill="none" stroke="#666" stroke-width="1.200"/></svg>
    <svg class="sb-minus" viewBox="0 0 18 4"><path d="M0 2h18" stroke="#666" stroke-width="3"/></svg>
    <span class="sb-slider"><span class="sb-fill"></span><span class="sb-knob"></span></span>
    <svg class="sb-plus2" viewBox="0 0 20 20"><path d="M10 1v18M1 10h18" stroke="#666" stroke-width="2.400"/></svg>
    <span class="sb-zoom">60%</span>
    <svg class="sb-v2"><use href="#vee"/></svg>
    <svg class="sb-full" viewBox="0 0 24 24"><path d="M1 8V1h7M16 1h7v7M23 16v7h-7M8 23H1v-7" fill="none" stroke="#666" stroke-width="2.200"/></svg>
  </div>
</footer>

<footer class="taskbar">
  <span class="start"><svg viewBox="0 0 24 24"><path d="M0 3.500l10-1.400V11.500H0zM11 2l13-2v11.500H11zM0 12.500h10v9.400L0 20.500zM11 12.500h13V24l-13-2z" fill="#000"/></svg></span>
  <div class="search">
    <svg viewBox="0 0 24 24"><circle cx="14.500" cy="9.500" r="7.500" fill="none" stroke="#111" stroke-width="1.400"/><path d="M9 15L1 23" stroke="#111" stroke-width="1.400"/></svg>
    <span>Type here to search</span>
  </div>
  <span class="slot"><svg class="cortana" viewBox="0 0 24 24"><circle cx="12" cy="12" r="10" fill="none" stroke="#000" stroke-width="3.200"/></svg></span>
  <span class="slot"><svg class="ti-view" viewBox="0 0 24 24"><path d="M3 1h16M3 5h16M3 19h16M3 23h16M4 8h12v8H4z" fill="none" stroke="#111" stroke-width="1.300"/><path d="M22 1v6M22 10v4M22 17v6" stroke="#111" stroke-width="1.500"/></svg></span>
  <span class="slot"><svg class="ti-app" viewBox="0 0 32 32"><path d="M1 4h13l3 4h14v22H1z" fill="#fcd36b"/><path d="M1 2h12v7H1z" fill="#d99a1c"/><path d="M9 30V18h14v12h-4v-7h-6v7z" fill="#2a78c8"/></svg></span>
  <span class="slot slot-on"><svg class="ti-app" viewBox="0 0 36 36"><circle cx="18" cy="18" r="17" fill="#0c72c4"/><path d="M2 14C5 4 14 1 20 1c9 0 15 7 15 14 0 6-6 6-10 6H13c0 6 8 9 16 5-5 8-15 9-20 6C3 28 1 20 2 14z" fill="#2db2d8"/><path d="M35 15c0 6-6 6-10 6H13c0-5 6-7 9-7 2-5-3-8-8-6 7-8 21-3 21 7z" fill="#5fd174"/><path d="M13 21h9c1 6 5 7 7 5-4 6-16 3-16-5z" fill="#0c5ea8"/></svg></span>
  <span class="slot"><svg class="ti-app" viewBox="0 0 32 38"><path d="M16 0l16 13v25H0V13z" fill="#0f6cbd"/><path d="M0 13l16 13 16-13v25H0z" fill="#28a8ea"/><path d="M4 15h24l-12 10z" fill="#fff"/></svg></span>
  <span class="slot slot-on slot-multi"><svg class="ti-app" viewBox="0 0 32 32"><use href="#chrome"/></svg><span class="ch-badge ch-photo"></span></span>
  <span class="slot slot-on"><svg class="ti-app" viewBox="0 0 32 38"><path d="M0 0l16 7 16-7v26L16 38 0 26z" fill="#c8302d"/><path d="M7 10l9 4 9-4v12l-9 7-9-7z" fill="#dcd9cf"/></svg></span>
  <span class="slot slot-on slot-act"><svg class="ti-app" viewBox="0 0 32 32"><use href="#chrome"/></svg><span class="ch-badge ch-s">S</span></span>
  <div class="tray">
    <span class="tr-sun"><svg viewBox="0 0 36 38"><ellipse cx="20" cy="19" rx="12" ry="18" fill="#fbc02d"/><path d="M6 25h13M22 22h12M3 29h30" stroke="#cdb38b" stroke-width="3"/><path d="M13 21c2-4 11-4 13 0z" fill="#dfcdb0"/></svg></span>
    <span class="tr-temp">29°C</span>
    <span class="tr-s tr-chev"><svg viewBox="0 0 18 10"><path d="M1 9l8-8 8 8" fill="none" stroke="#222" stroke-width="1.200"/></svg></span>
    <span class="tr-s tr-meet"><svg viewBox="0 0 20 22"><path d="M5 1h6M5 21h6" stroke="#222"/><rect x="2" y="4" width="11" height="14" rx="1" fill="none" stroke="#222"/><path d="M13 9l5-3v10l-5-3" fill="none" stroke="#222"/></svg></span>
    <span class="tr-s tr-cloud"><svg viewBox="0 0 24 24"><path d="M6 18a5 5 0 0 1 0-10 6 6 0 0 1 11-1 5 5 0 0 1 2 9z" fill="#666"/><circle cx="17" cy="17" r="6.500" fill="#e02020"/><path d="M14.500 14.500l5 5M19.500 14.500l-5 5" stroke="#fff" stroke-width="1.300"/></svg></span>
    <span class="tr-s tr-batt"><svg viewBox="0 0 24 16"><rect x="1" y="1" width="21" height="14" fill="none" stroke="#222"/><rect x="3" y="3" width="7" height="10" fill="#222"/></svg></span>
    <span class="tr-s tr-spk"><svg viewBox="0 0 22 22"><path d="M1 8h4l5-6v18l-5-6H1z" fill="none" stroke="#222"/><path d="M13 7c2 2 2 6 0 8M16 4c4 4 4 10 0 14" fill="none" stroke="#222"/></svg></span>
    <span class="tr-eng">ENG</span>
    <span class="tr-clock"><span>10:06</span><span>09-01-2022</span></span>
    <span class="tr-note"><svg viewBox="0 0 26 30"><path d="M0 0h26v20H12l-5 6v-6H0z" fill="#000"/><path d="M6 6h14M6 10h14M6 14h14" stroke="#fff" stroke-width="1.300"/></svg><span class="tr-badge">1</span></span>
  </div>
</footer>
</body>
</html>
```

FILE: styles.css
```
* { box-sizing: border-box; }
html, body { margin: 0; height: 100%; }
body {
  width: 1920px; height: 1080px; overflow: hidden; display: flex; flex-direction: column;
  background: #fff; color: #222; font-family: "Open Sans", "Noto Sans", sans-serif; font-size: 18px;
}
svg { display: block; flex: none; }
.sprite { position: absolute; }

/* chrome tabs */
.tabstrip { height: 51px; background: #dee1e6; display: flex; padding-left: 14px; flex: none; position: relative; }
.tab { width: 188.2px; height: 51px; flex: none; display: flex; align-items: center; padding-left: 16px; position: relative; font-size: 17px; color: #45484c; }
.tab.sep::after { content: ""; position: absolute; right: 0; top: 11px; height: 30px; width: 1px; background: #8a8d91; }
.tab.active { background: #fff; border-radius: 14px 14px 0 0; color: #45484c; }
.fav { width: 24px; height: 24px; }
.yh { font: italic bold 15px "Liberation Sans", sans-serif; fill: #fff; }
.tab-t { width: 92px; margin-left: 13px; white-space: nowrap; overflow: hidden; -webkit-mask-image: linear-gradient(90deg, #000 70%, transparent); mask-image: linear-gradient(90deg, #000 70%, transparent); }
.tx { width: 14px; height: 14px; margin-left: 13px; }
.newtab { width: 20px; height: 20px; margin-left: 20px; align-self: center; }
.winctl { margin-left: auto; display: flex; align-items: flex-start; padding-right: 4px; }
.wc-list { width: 14px; height: 9px; margin: 18px 28px 0 0; }
.wc { width: 67px; height: 44px; display: flex; align-items: center; justify-content: center; }
.wc svg { width: 16px; height: 16px; }
.wc-min { background: #c4c7cb; }

/* address bar */
.addr { height: 52px; flex: none; display: flex; align-items: center; padding-left: 21px; position: relative; }
.nav { width: 24px; height: 24px; margin-right: 24px; }
.omni { width: 1594px; height: 42px; margin-left: -3px; border-radius: 21px; background: #f1f3f4; display: flex; align-items: center; padding-left: 19px; flex: none; }
.lock { width: 14px; height: 18px; margin-right: 18px; }
.url { width: 1432px; font-size: 20.200px; color: #5f6368; white-space: nowrap; overflow: hidden; }
.url-host { font-weight: 400; color: #202124; }
.omni-i { width: 24px; height: 24px; margin-left: 26px; }
.ext { width: 22px; height: 22px; margin-left: 28px; }
.ava-s { width: 32px; height: 32px; border-radius: 50%; background: #7b1fa2; color: #fff; font-size: 15px; display: flex; align-items: center; justify-content: center; margin-left: 6px; flex: none; }
.dots { width: 42px; height: 42px; border: 3px solid #4a8df0; border-radius: 50%; display: flex; align-items: center; justify-content: center; margin-left: 10px; flex: none; }
.tooltip { position: absolute; left: 1747px; top: 4px; width: 77px; height: 29px; background: #ffffe1; border: 1px solid #555; font-size: 16px; color: #111; line-height: 27px; padding-left: 3px; white-space: nowrap; }

/* bookmarks */
.bookmarks { height: 52px; flex: none; display: flex; align-items: center; padding-left: 23px; padding-bottom: 5px; border-bottom: 2px solid #dcdcdc; }
.bm-i { width: 22px; height: 22px; }
.bm-yt { width: 26px; height: 20px; }
.bm-t { font-size: 17px; color: #55585c; margin-left: 12px; }
.bm-apps { margin-right: 26px; }
.bm-gmail { margin-right: 25px; }
.bm-youtube { margin-right: 22px; }
.reading { margin-left: auto; display: flex; align-items: center; height: 26px; border-left: 1px solid #ddd; padding-left: 15px; padding-right: 22px; }
.rl-i { width: 22px; height: 22px; }
.reading .bm-t { margin-left: 14px; }

/* app head */
.apphead { height: 96px; flex: none; display: flex; justify-content: space-between; border-bottom: 2px solid #e3e3e3; }
.titlerow { height: 46px; display: flex; align-items: center; padding-left: 23px; }
.i-back { width: 12px; height: 20px; }
.doc-title { font-size: 18.600px; margin-left: 25px; color: #222; white-space: nowrap; }
.doc-div { width: 1px; height: 37px; background: #ddd; margin-left: 25px; }
.doc-i { width: 24px; height: 24px; }
.doc-div + .doc-i { margin-left: 27px; }
.doc-i + .doc-i { margin-left: 30px; }
.doc-i + .doc-i + .doc-i { margin-left: 26px; }
.menurow { height: 48px; padding-top: 4px; display: flex; align-items: center; padding-left: 22px; gap: 42.500px; font-size: 19.700px; color: #333; }
.bino { width: 26px; height: 22px; margin-left: -9.500px; }
.apphead-r { display: flex; align-items: center; padding-right: 16px; }
.btn-upgrade { width: 127px; height: 48px; border-radius: 24px; background: linear-gradient(90deg, #ffe27d, #ffcd6a); color: #4d3300; font-weight: 600; font-size: 18.500px; display: flex; align-items: center; justify-content: center; }
.btn-publish { width: 130px; height: 48px; border-radius: 8px; background: #0a80ff; color: #fff; margin-left: 15px; display: flex; align-items: center; justify-content: center; gap: 12px; }
.pub-i { width: 24px; height: 24px; }
.btn-share { width: 116px; height: 48px; border-radius: 8px; border: 1px solid #e6e6e6; color: #666; margin-left: 18px; display: flex; align-items: center; justify-content: center; gap: 14px; }
.shr-i { width: 24px; height: 24px; }
.ava-l { width: 42px; height: 42px; border-radius: 50%; background: #7b1fa2; color: #fff; display: flex; align-items: center; justify-content: center; margin-left: 27px; }
.ava-c { width: 10px; height: 8px; margin-left: 23px; color: #555; }

/* toolbar */
.toolbar { height: 67px; flex: none; display: flex; align-items: center; border-bottom: 2px solid #e3e3e3; }
.tg { display: flex; align-items: center; }
.tg1 { margin-left: 20px; }
.tg2 { margin-left: 14px; }
.tg3 { margin-left: 20px; }
.tg4 { margin-left: 7px; }
.ti { width: 57px; display: flex; align-items: center; justify-content: center; position: relative; }
.ti svg { width: 26px; height: 26px; }
.tg4 .ti { width: 58.200px; }
.ti svg.mc { width: 9px; height: 7px; margin-left: 2px; color: #555; }
.sel { height: 42px; border: 1px solid #e3e3e3; border-radius: 6px; display: flex; align-items: center; justify-content: space-between; padding: 0 7px 0 16px; font-size: 18px; color: #333; white-space: nowrap; }
.sel > svg:last-child { width: 9px; height: 7px; color: #777; }
.sel-font { width: 180px; margin-left: 13px; }
.sel-font > span { padding-top: 3px; }
.sel-size { width: 75px; margin-left: 9px; padding-right: 8px; }
.tb-div { width: 1px; height: 36px; background: #ddd; margin-left: 24px; }
.sel-line { width: 72px; margin-left: 18px; padding: 0 6px 0 8px; }
.sel-line .ln { width: 40px; height: 8px; }

/* workspace */
.workspace { height: 652px; flex: none; display: grid; grid-template-columns: 337px 1103px 420px 60px; }
.symbols { display: flex; flex-direction: column; background: #fff; min-height: 0; }
.sym-head { height: 67px; flex: none; display: flex; align-items: center; padding-left: 12px; }
.sym-logo { width: 26px; height: 22px; }
.sym-t { font-size: 20.500px; font-weight: 600; margin-left: 18px; color: #111; }
.sym-up { width: 20px; height: 11px; margin-left: 24px; }
.sym-s { width: 24px; height: 24px; margin-left: 66px; }
.sym-c { width: 20px; height: 18px; margin-left: 17px; }
.sym-body { flex: 1; display: flex; min-height: 0; background: #f4f4f4; border-top: 1px solid #e4e4e4; }
.sym-list { flex: 1; min-width: 0; }
.lib-row { height: 60px; background: #e4e4e4; display: flex; align-items: center; position: relative; padding: 0 0 2px 27px; }
.lib-c { width: 16px; height: 10px; color: #777; }
.lib-t { font-size: 20px; margin-left: 5px; color: #222; white-space: nowrap; }
.lib-a { width: 15px; height: 15px; }
.lib-row > .lib-a:nth-of-type(2) { margin-left: auto; }
.lib-p { margin-left: 14px; }
.lib-x { width: 14px; height: 14px; color: #666; margin: 0 32px 0 17px; }
.lib-x-only { margin-left: auto; }
.lib-item { height: 88px; display: flex; align-items: center; padding-left: 24px; }
.mini-load { width: 54px; height: 28px; background: #4aa19a; color: #fff; font: bold 4px/28px "Liberation Sans", sans-serif; text-align: center; }
.shapes { display: grid; grid-template-columns: repeat(4, 59px); grid-auto-rows: 72px; column-gap: 13px; padding: 8px 0 0 22px; align-items: center; height: 303px; }
.shapes svg { width: 59px; height: auto; }
.sh { fill: none; stroke: #a0a0a0; stroke-width: 1.300; }
.lib-closed { background: transparent; height: 60px; padding-left: 31px; }
.lib-c-r { width: 8px; height: 12px; margin-right: 9px; }
.lib-closed .lib-t { margin-left: 0; }
.vs { width: 12px; background: #e8e8e8; flex: none; position: relative; }
.vs-thumb { background: #b8b8b8; border-radius: 6px; width: 100%; height: 262px; }
.vs-left { height: 117px; }
.vs-center { position: absolute; top: 175px; height: 244px; left: 0; }

/* stage */
.stage { display: flex; flex-direction: column; min-height: 0; background: #e8e8e8; }
.ruler-top { height: 30px; flex: none; display: flex; background: #f9f9f9; }
.ruler-corner { width: 29px; background: #f9f9f9; }
.rt { width: 1074px; height: 30px; }
.rl text { font: 10px "Liberation Sans", sans-serif; fill: #9a9a9a; }
.stage-mid { flex: 1; display: flex; min-height: 0; }
.rlft { width: 29px; height: 622px; background: #f9f9f9; }
.canvas-col { flex: 1; display: flex; flex-direction: column; min-width: 0; }
.canvas-row { height: 610px; display: flex; }
.canvas { width: 1061px; padding-left: 32px; flex: none; background: #e8e8e8; }
.page { width: 1010px; height: 610px; background: #fff; }
.vs-c { width: 14px; }
.hs { height: 12px; background: #ececec; position: relative; border-top: 1px solid #ddd; }
.hs-thumb { position: absolute; left: 322px; width: 405px; height: 11px; background: #b6b6b6; border-radius: 6px; }

/* diagram */
.edge path { fill: none; stroke: #3a63b0; stroke-width: 1.200; }
.edge path.thin { stroke-width: 1; }
.bracket { fill: none; stroke: #4a7fd0; stroke-width: 1; }
.nt text { font: 14.500px "Liberation Sans", sans-serif; fill: #fff; text-anchor: middle; }
.nt .nt-s { font-size: 12.500px; }
.nt .nt-m { font-size: 14px; }
.lbl text { font: 14px "Liberation Sans", sans-serif; fill: #3f9a8c; text-anchor: middle; }
.lbl-blue { font: bold 14px "Liberation Sans", sans-serif; fill: #2f55a4; text-anchor: middle; white-space: pre; }
.lbl-bold { font: bold 13.500px "Liberation Sans", sans-serif; fill: #3f9a8c; text-anchor: middle; }

/* props */
.props { display: flex; flex-direction: column; min-height: 0; background: #f4f4f4; border-left: 1px solid #e0e0e0; }
.props-head { height: 49px; flex: none; background: #fff; border-bottom: 1px solid #e4e4e4; display: flex; align-items: center; padding: 0 0 2px 24px; }
.props-t { font-weight: 600; font-size: 18.500px; color: #333; }
.pin { width: 20px; height: 20px; margin-left: auto; }
.props-x { width: 18px; height: 18px; margin: 0 12px 0 37px; color: #333; }
.props-body { flex: 1; display: flex; min-height: 0; }
.props-list { flex: 1; min-width: 0; }
.actions { height: 134px; border-bottom: 1px solid #e0e0e0; display: flex; padding: 46px 0 0 22px; }
.act { display: flex; flex-direction: column; align-items: center; gap: 13px; font-size: 19.500px; color: #111; white-space: nowrap; width: 111px; }
.act svg { width: 28px; height: 28px; }
.act-r { margin-left: 15px; width: 108px; }
.act-w { margin-left: 21px; width: 103px; }
.setup { padding: 24px 22px 0 22px; }
.setup-t { font-size: 20px; font-weight: 700; color: #111; margin: 0; line-height: 28px; }
.opt { display: flex; align-items: center; gap: 5px; height: 24px; font-size: 18.500px; color: #222; }
.opt-auto { margin-top: 41px; }
.opt-pre { margin-top: 26px; }
.opt-cus { margin-top: 13px; }
.cb { width: 21px; height: 21px; border-radius: 3px; background: #0a80ff; display: flex; align-items: center; justify-content: center; flex: none; }
.cb svg { width: 16px; height: 16px; }
.rb { width: 21px; height: 21px; border-radius: 50%; background: #fff; border: 1px solid #ddd; flex: none; }
.rb-on { border: 2px solid #1677ff; position: relative; }
.rb-on::after { content: ""; position: absolute; inset: 2px; border-radius: 50%; background: #1677ff; }
.field { margin: 13px 0 0 29px; width: 333px; height: 41px; background: #fff; border: 1px solid #e6e6e6; border-radius: 6px; padding-left: 11px; line-height: 39px; font-size: 18.500px; color: #5a6270; }
.dims { margin: 25px 0 0 29px; display: flex; align-items: center; width: 333px; }
.dim { width: 120px; height: 36px; border: 1px solid #e0e0e0; border-radius: 4px; background: #f0f0f0; color: #c8c8c8; padding-left: 11px; line-height: 34px; font-size: 18px; }
.dim-x { width: 92px; text-align: center; padding-right: 14px; font-size: 18px; color: #111; }
.prop-row { display: flex; align-items: center; justify-content: space-between; height: 36px; width: 362px; margin-top: 30px; font-size: 19.500px; color: #111; }
.pick { width: 120px; height: 36px; background: #fff; border: 1px solid #e6e6e6; border-radius: 4px; display: flex; align-items: center; justify-content: space-between; padding: 0 15px 0 12px; font-size: 18px; color: #5a6270; white-space: nowrap; }
.pick svg { width: 13px; height: 8px; color: #5a6270; }

/* rail */
.rail { display: flex; flex-direction: column; align-items: center; background: #f4f4f4; border-left: 1px solid #e4e4e4; }
.rail-i { width: 48px; height: 48px; display: flex; align-items: center; justify-content: center; flex: none; }
.rail-i svg { width: 28px; height: 28px; }
.rail-on { background: #e4e4e4; }

/* status bar */
.statusbar { height: 50px; flex: none; background: #f6f6f6; border-top: 2px solid #e4e4e4; display: flex; align-items: center; padding: 0 0 1px 26px; }
.sb-pages { width: 33px; height: 24px; }
.sb-page { font-size: 19px; color: #555; margin-left: 36px; }
.sb-v { width: 13px; height: 8px; margin-left: 61px; color: #777; }
.sb-div { width: 1px; height: 24px; background: #ddd; margin-left: 40px; }
.sb-cur { font-size: 19.500px; font-weight: 600; color: #0a80ff; margin-left: 30px; }
.sb-plus { width: 20px; height: 20px; margin-left: 46px; }
.sb-right { margin-left: auto; display: flex; align-items: center; padding-right: 5px; }
.sb-focus { width: 22px; height: 22px; }
.sb-ft { font-size: 18.500px; color: #222; margin-left: 19px; width: 50px; }
.sb-play { width: 24px; height: 24px; margin-left: 43px; }
.sb-minus { width: 18px; height: 4px; margin-left: 18px; }
.sb-slider { width: 150px; height: 8px; background: #e0e0e0; border-radius: 4px; margin-left: 7px; position: relative; }
.sb-fill { position: absolute; left: 0; top: 0; height: 8px; width: 23px; background: #b5b5b5; border-radius: 4px; }
.sb-knob { position: absolute; left: 19px; top: -4px; width: 14px; height: 14px; background: #fff; border: 3px solid #b5b5b5; border-radius: 50%; }
.sb-plus2 { width: 20px; height: 20px; margin-left: 8px; }
.sb-zoom { font-size: 18px; color: #555; margin-left: 14px; width: 42px; }
.sb-v2 { width: 12px; height: 7px; margin-left: 3px; color: #555; }
.sb-full { width: 24px; height: 24px; margin-left: 28px; }

/* taskbar */
.taskbar { height: 60px; flex: none; background: #d9dcd3; display: flex; align-items: stretch; }
.start { width: 73px; display: flex; align-items: center; justify-content: center; padding-right: 3px; }
.start svg { width: 25px; height: 25px; }
.search { width: 513px; margin: 2px 0 1px; background: #fff; display: flex; align-items: center; padding-left: 18px; font-size: 21.500px; color: #222; flex: none; }
.search svg { width: 26px; height: 26px; }
.search span { margin-left: 15px; white-space: nowrap; }
.slot { width: 75px; flex: none; display: flex; align-items: center; justify-content: center; position: relative; }
.cortana { width: 24px; height: 24px; }
.ti-view { width: 24px; height: 26px; margin-right: 6px; }
.ti-app { width: 34px; height: 34px; }
.slot-on::after { content: ""; position: absolute; left: 7px; right: 6px; bottom: 0; height: 3px; background: #0a78d4; }
.slot-act { background: #ececea; }
.slot-act::after { left: 0; right: 0; }
.ch-badge { position: absolute; left: 41px; top: 28px; width: 24px; height: 24px; border-radius: 50%; }
.ch-photo { background: radial-gradient(circle at 40% 40%, #999, #111 70%); }
.ch-s { background: #7b1fa2; color: #fff; font-size: 13px; display: flex; align-items: center; justify-content: center; }
.tray { margin-left: auto; display: flex; align-items: center; padding-right: 21px; color: #222; }
.tr-sun { width: 46px; }
.tr-sun svg { width: 34px; height: 38px; }
.tr-temp { width: 62px; font-size: 19px; }
.tr-s { display: flex; justify-content: center; }
.tr-chev { width: 32px; }
.tr-chev svg { width: 18px; height: 10px; }
.tr-meet { width: 38px; }
.tr-meet svg { width: 20px; height: 24px; }
.tr-cloud { width: 36px; }
.tr-cloud svg { width: 24px; height: 24px; }
.tr-batt { width: 38px; }
.tr-batt svg { width: 24px; height: 16px; }
.tr-spk { width: 36px; }
.tr-spk svg { width: 22px; height: 22px; }
.tr-eng { width: 56px; text-align: center; font-size: 16px; }
.tr-clock { width: 110px; display: flex; flex-direction: column; align-items: center; gap: 6px; font-size: 17px; line-height: 22px; }
.tr-note { width: 60px; position: relative; display: flex; justify-content: center; }
.tr-note svg { width: 26px; height: 30px; margin-top: -8px; }
.tr-badge { position: absolute; left: 30px; top: 4px; width: 26px; height: 26px; border-radius: 50%; background: #d9dcd3; border: 1px solid #333; font-size: 16px; text-align: center; line-height: 24px; }
```
